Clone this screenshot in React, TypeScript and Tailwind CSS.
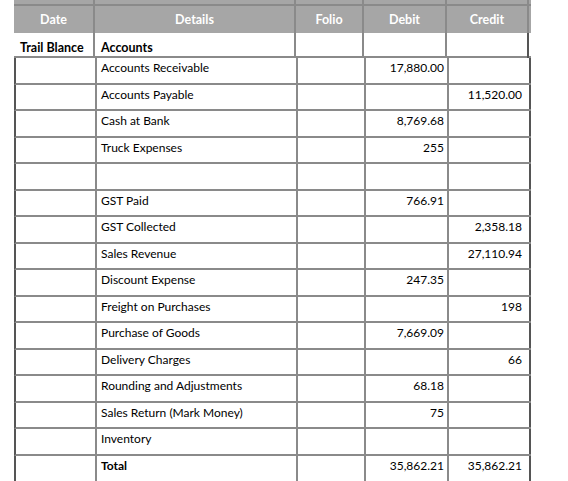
const rows: [string, string, string][] = [
  ["Accounts Receivable", "17,880.00", ""],
  ["Accounts Payable", "", "11,520.00"],
  ["Cash at Bank", "8,769.68", ""],
  ["Truck Expenses", "255", ""],
  ["", "", ""],
  ["GST Paid", "766.91", ""],
  ["GST Collected", "", "2,358.18"],
  ["Sales Revenue", "", "27,110.94"],
  ["Discount Expense", "247.35", ""],
  ["Freight on Purchases", "", "198"],
  ["Purchase of Goods", "7,669.09", ""],
  ["Delivery Charges", "", "66"],
  ["Rounding and Adjustments", "68.18", ""],
  ["Sales Return (Mark Money)", "75", ""],
  ["Inventory", "", ""],
];

const cols = "grid grid-cols-[81px_201px_68px_83px_82px]";
const cell = "border-r-2 border-[#8a8a8a] h-full";

export default function App() {
  return (
    <div className="w-[568px] h-[481px] bg-white overflow-hidden text-[12px] text-black" style={{ fontFamily: "Lato, 'Open Sans', sans-serif" }}>
      <div className="ml-[14px] w-[517px]">
        <div className={`${cols} h-[6px] bg-[#a6a6a6] border-b-2 border-[#8a8a8a]`}>
          {[0, 1, 2, 3, 4].map((i) => (
            <div key={i} className={`${cell} ${i === 4 ? "border-r-0" : ""}`} />
          ))}
        </div>
        <div className={`${cols} h-[27px] bg-[#a6a6a6] text-white font-bold text-[12.5px] items-center`}>
          {["Date", "Details", "Folio", "Debit", "Credit"].map((t, i) => (
            <div key={t} className={`${cell} ${i === 4 ? "border-r-0" : ""} flex items-center justify-center pt-[2px]`}>{t}</div>
          ))}
        </div>
        <div className={`${cols} h-[25px] font-bold text-[12.5px] border-b-2 border-[#8a8a8a]`}>
          <div className="-ml-[14px] pl-[20px] pt-[6px] border-r-2 border-[#8a8a8a] w-[95px] whitespace-nowrap">Trail Blance</div>
          <div className={`${cell} pl-[6px] pt-[6px]`}>Accounts</div>
          <div className={cell} />
          <div className={cell} />
          <div className={`${cell} border-[#555]`} />
        </div>
        {[...rows, ["Total", "35,862.21", "35,862.21"] as [string, string, string]].map(([d, dr, cr], i) => (
          <div key={i} className={`${cols} h-[26.5px] border-l-2 border-[#555] ${i < rows.length ? "border-b-2 border-b-[#8a8a8a]" : ""}`}>
            <div className={cell} />
            <div className={`${cell} pl-[4px] pt-[1px] ${i === rows.length ? "font-bold" : ""}`}>{d}</div>
            <div className={cell} />
            <div className={`${cell} text-right pr-[3px] pt-[1px]`}>{dr}</div>
            <div className={`${cell} border-r-[#555] text-right pr-[7px] pt-[1px]`}>{cr}</div>
          </div>
        ))}
      </div>
    </div>
  );
}
